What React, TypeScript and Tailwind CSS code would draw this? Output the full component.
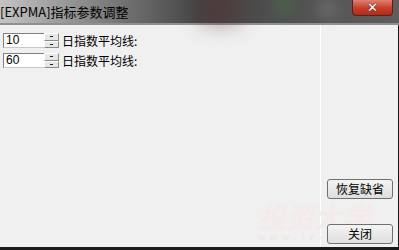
import React from 'react';

const ROWS = [
  { value: '10', label: '日指数平均线:' },
  { value: '60', label: '日指数平均线:' },
];

function SpinHalf() {
  return (
    <div className="flex-1 flex items-center justify-center border border-t-white border-l-white border-b-[#8a8a8a] border-r-[#8a8a8a] bg-[#e6e6e6]">
      <div className="w-[3px] h-[1px] bg-[#202020]" />
    </div>
  );
}

function Btn({ label }: { label: string }) {
  return (
    <button className="relative z-10 w-[66px] h-[20px] rounded-[3px] border border-[#707070] bg-gradient-to-b from-[#f4f4f4] to-[#dedede] text-[12px] text-black leading-none flex items-center justify-center">
      {label}
    </button>
  );
}

export default function App() {
  const font = { fontFamily: '"Noto Sans CJK SC", "Liberation Sans", sans-serif' };
  return (
    <div className="relative w-[399px] h-[250px] flex flex-col bg-[#1a1a1a] overflow-hidden" style={font}>
      {/* Title bar */}
      <div className="relative h-[23px] flex items-center bg-gradient-to-r from-[#c4c4c4] via-[#454545] to-[#5e5e5e]">
        <div className="absolute left-[200px] top-0 w-[40px] h-[20px] rounded-full bg-[#5a2a2a] blur-md opacity-70" />
        <div className="absolute left-[278px] top-0 w-[12px] h-[10px] rounded-full bg-[#40a040] blur-sm opacity-80" />
        <div className="absolute left-[320px] top-[4px] w-[14px] h-[10px] rounded-full bg-[#b0b0b0] blur-sm opacity-60" />
        <span className="relative text-[13px] text-black leading-none">[EXPMA]指标参数调整</span>
        <div className="absolute left-[352px] top-0 w-[41px] h-[16px] rounded-b-[4px] border border-t-0 border-[#5a2020] bg-gradient-to-b from-[#e08070] via-[#c8402c] to-[#b02a18] flex items-center justify-center">
          <span className="text-white font-bold text-[13px] leading-none" style={{ fontFamily: '"DejaVu Sans", sans-serif', textShadow: '0 0 1px #333, 0 0 1px #333' }}>✕</span>
        </div>
      </div>
      <div className="h-[2px] bg-[#909090]" />
      {/* Body */}
      <div className="flex-1 flex mr-[1px] mb-[3px]">
        <div className="w-[321px] bg-[#f0f0f0] border-r border-white pt-[8px] pl-[3px] flex flex-col gap-[5px]">
          {ROWS.map((r, i) => (
            <div key={i} className="flex items-center h-[15px]">
              <div className="w-[41px] h-[15px] bg-white border border-t-[#808080] border-l-[#808080] border-b-[#c8c8c8] border-r-0 text-[12px] leading-[13px] pl-[2px] text-black" style={{ fontFamily: '"Liberation Sans", sans-serif' }}>
                {r.value}
              </div>
              <div className="flex flex-col w-[15px] h-[15px]">
                <SpinHalf />
                <SpinHalf />
              </div>
              <span className="ml-[3px] text-[12px] text-black leading-none">{r.label}</span>
            </div>
          ))}
        </div>
        <div className="flex-1 bg-[#f0f0f0] flex flex-col items-center pl-[1px] pt-[154px] gap-[25px]">
          <Btn label="恢复缺省" />
          <Btn label="关闭" />
        </div>
      </div>
      {/* Watermark */}
      <div className="absolute left-[258px] top-[202px] flex flex-col items-start pointer-events-none">
        <span className="whitespace-nowrap text-[28px] font-bold italic text-[#f5eaea] leading-none">投资大学</span>
        <span className="whitespace-nowrap text-[9px] font-bold italic text-[#ede8e8] tracking-[5px] leading-none mt-[3px]" style={{ fontFamily: '"Liberation Sans", sans-serif' }}>www.iv-c</span>
      </div>
    </div>
  );
}
